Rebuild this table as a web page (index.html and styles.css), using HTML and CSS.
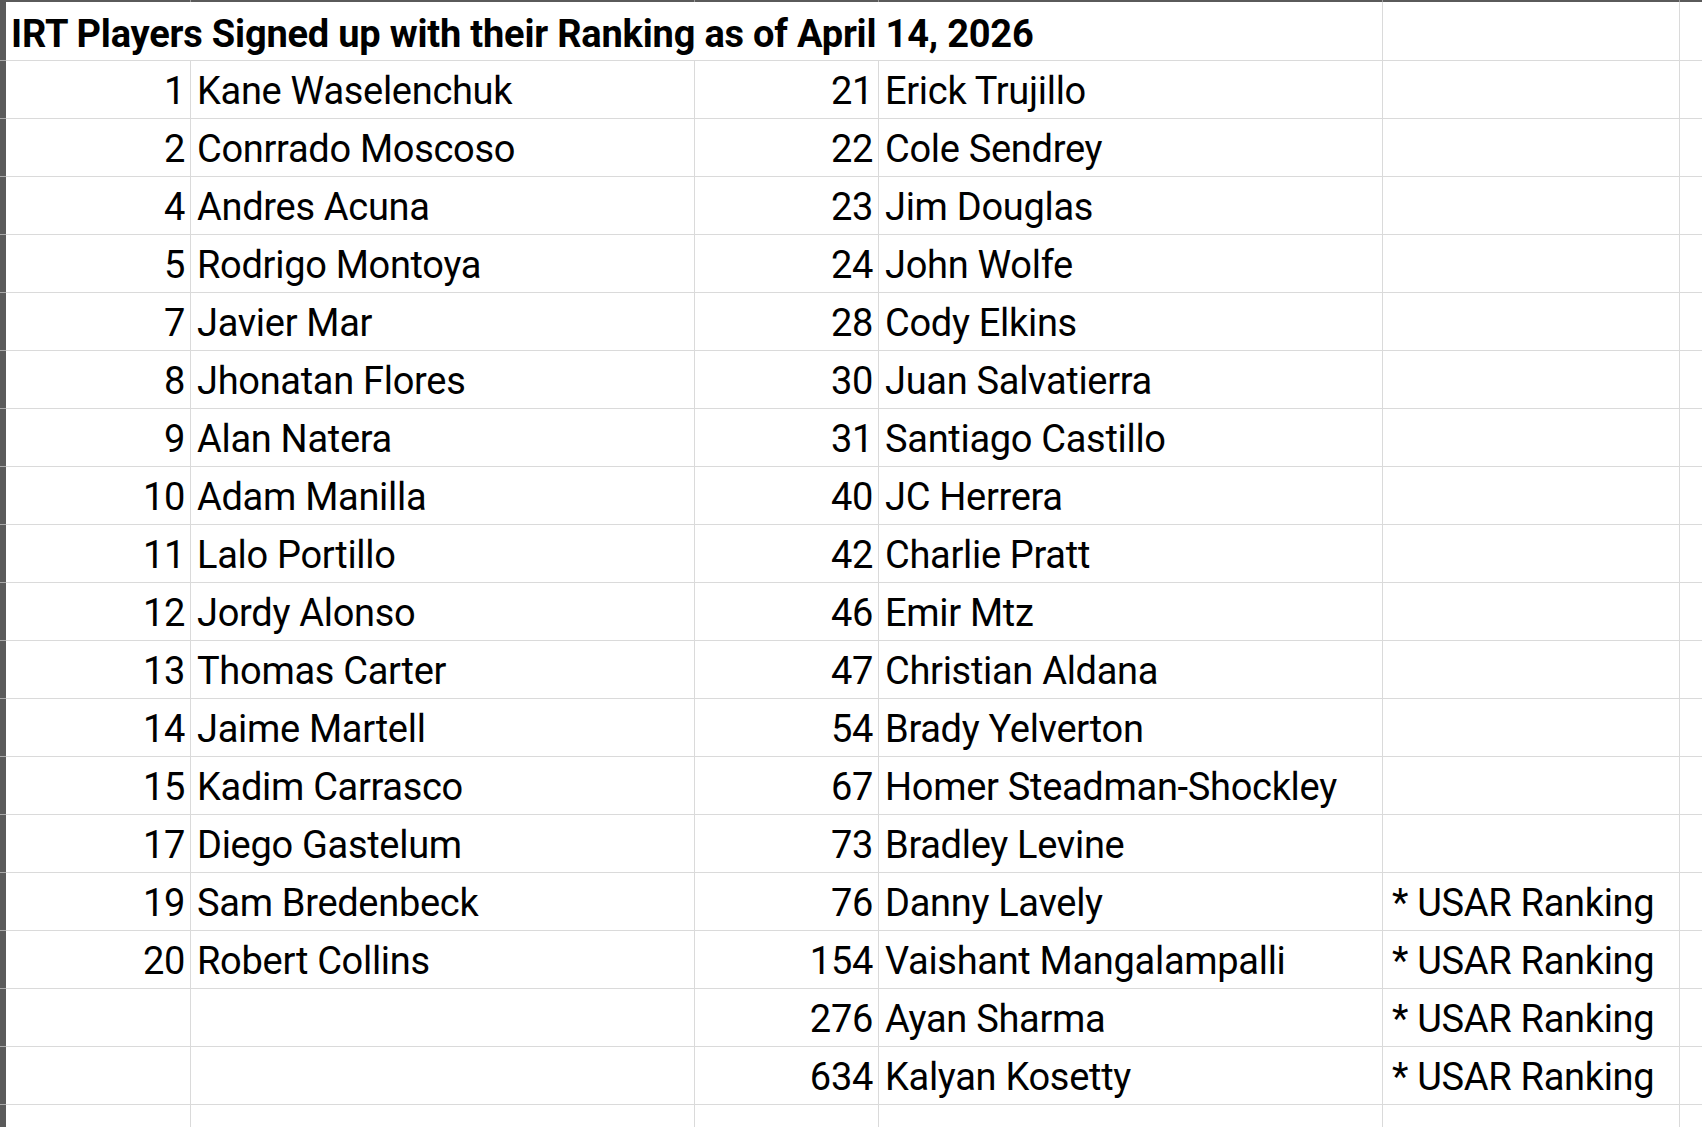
FILE: index.html
```html
<!DOCTYPE html>
<html>
<head>
<meta charset="utf-8">
<link rel="stylesheet" href="styles.css">
</head>
<body>
<div class="sheet">
  <div class="corner"></div><div class="colhead"></div><div class="colhead"></div><div class="colhead"></div><div class="colhead"></div><div class="colhead"></div><div class="colhead last"></div>

  <div class="rh"></div><div class="c title">IRT Players Signed up with their Ranking as of April 14, 2026</div><div class="c"></div><div class="c end"></div>

  <div class="rh"></div><div class="c num">1</div><div class="c name">Kane Waselenchuk</div><div class="c num">21</div><div class="c name">Erick Trujillo</div><div class="c"></div><div class="c end"></div>
  <div class="rh"></div><div class="c num">2</div><div class="c name">Conrrado Moscoso</div><div class="c num">22</div><div class="c name">Cole Sendrey</div><div class="c"></div><div class="c end"></div>
  <div class="rh"></div><div class="c num">4</div><div class="c name">Andres Acuna</div><div class="c num">23</div><div class="c name">Jim Douglas</div><div class="c"></div><div class="c end"></div>
  <div class="rh"></div><div class="c num">5</div><div class="c name">Rodrigo Montoya</div><div class="c num">24</div><div class="c name">John Wolfe</div><div class="c"></div><div class="c end"></div>
  <div class="rh"></div><div class="c num">7</div><div class="c name">Javier Mar</div><div class="c num">28</div><div class="c name">Cody Elkins</div><div class="c"></div><div class="c end"></div>
  <div class="rh"></div><div class="c num">8</div><div class="c name">Jhonatan Flores</div><div class="c num">30</div><div class="c name">Juan Salvatierra</div><div class="c"></div><div class="c end"></div>
  <div class="rh"></div><div class="c num">9</div><div class="c name">Alan Natera</div><div class="c num">31</div><div class="c name">Santiago Castillo</div><div class="c"></div><div class="c end"></div>
  <div class="rh"></div><div class="c num">10</div><div class="c name">Adam Manilla</div><div class="c num">40</div><div class="c name">JC Herrera</div><div class="c"></div><div class="c end"></div>
  <div class="rh"></div><div class="c num">11</div><div class="c name">Lalo Portillo</div><div class="c num">42</div><div class="c name">Charlie Pratt</div><div class="c"></div><div class="c end"></div>
  <div class="rh"></div><div class="c num">12</div><div class="c name">Jordy Alonso</div><div class="c num">46</div><div class="c name">Emir Mtz</div><div class="c"></div><div class="c end"></div>
  <div class="rh"></div><div class="c num">13</div><div class="c name">Thomas Carter</div><div class="c num">47</div><div class="c name">Christian Aldana</div><div class="c"></div><div class="c end"></div>
  <div class="rh"></div><div class="c num">14</div><div class="c name">Jaime Martell</div><div class="c num">54</div><div class="c name">Brady Yelverton</div><div class="c"></div><div class="c end"></div>
  <div class="rh"></div><div class="c num">15</div><div class="c name">Kadim Carrasco</div><div class="c num">67</div><div class="c name">Homer Steadman-Shockley</div><div class="c"></div><div class="c end"></div>
  <div class="rh"></div><div class="c num">17</div><div class="c name">Diego Gastelum</div><div class="c num">73</div><div class="c name">Bradley Levine</div><div class="c"></div><div class="c end"></div>
  <div class="rh"></div><div class="c num">19</div><div class="c name">Sam Bredenbeck</div><div class="c num">76</div><div class="c name">Danny Lavely</div><div class="c note">* USAR Ranking</div><div class="c end"></div>
  <div class="rh"></div><div class="c num">20</div><div class="c name">Robert Collins</div><div class="c num">154</div><div class="c name">Vaishant Mangalampalli</div><div class="c note">* USAR Ranking</div><div class="c end"></div>
  <div class="rh"></div><div class="c num"></div><div class="c name"></div><div class="c num">276</div><div class="c name">Ayan Sharma</div><div class="c note">* USAR Ranking</div><div class="c end"></div>
  <div class="rh"></div><div class="c num"></div><div class="c name"></div><div class="c num">634</div><div class="c name">Kalyan Kosetty</div><div class="c note">* USAR Ranking</div><div class="c end"></div>
  <div class="rh"></div><div class="c"></div><div class="c"></div><div class="c"></div><div class="c"></div><div class="c"></div><div class="c end"></div>
</div>
</body>
</html>
```

FILE: styles.css
```css
html, body {
  margin: 0;
  padding: 0;
  background: #ffffff;
  overflow: hidden;
}

.sheet {
  display: grid;
  grid-template-columns: 6px 185px 504px 184px 504px 297px 1fr;
  grid-template-rows: 2px 59px;
  grid-auto-rows: 58px;
  width: 1702px;
  height: 1127px;
  overflow: hidden;
  font-family: Roboto, "Liberation Sans", sans-serif;
  font-size: 38px;
  letter-spacing: -0.3px;
  color: #000000;
}

.corner {
  background: #5a5a5a;
}

.colhead {
  background: #5a5a5a;
  border-right: 1px solid #9a9a9a;
}

.colhead.last {
  border-right: none;
}

.rh {
  background: #5a5a5a;
  border-bottom: 1px solid #a8a8a8;
}

.c {
  border-right: 1px solid #dadada;
  border-bottom: 1px solid #dadada;
  display: flex;
  align-items: flex-end;
  line-height: 44px;
  padding-bottom: 5px;
  white-space: nowrap;
  overflow: visible;
  min-width: 0;
  box-sizing: border-box;
}

.c.end {
  border-right: none;
}

.title {
  grid-column: 2 / 6;
  font-weight: bold;
  padding-left: 5px;
  padding-bottom: 4px;
  letter-spacing: -0.2px;
}

.num {
  justify-content: flex-end;
  padding-right: 5px;
}

.name {
  padding-left: 6px;
}

.note {
  padding-left: 9px;
}
```
